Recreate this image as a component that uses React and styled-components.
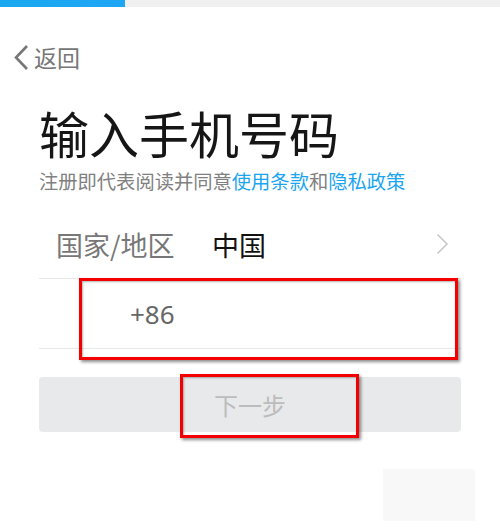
import React from 'react';
import styled, { createGlobalStyle } from 'styled-components';

const GlobalStyle = createGlobalStyle`
  html, body {
    margin: 0;
    padding: 0;
    background: #fff;
  }
  body {
    font-family: "Noto Sans CJK SC", "Noto Sans", sans-serif;
  }
`;

const Page = styled.div`
  position: relative;
  width: 500px;
  height: 531px;
  overflow: hidden;
  background: #fff;
`;

const Progress = styled.div`
  height: 7px;
  background: #f0f0f0;
`;

const ProgressFill = styled.div`
  height: 100%;
  background: linear-gradient(90deg, #19a8f0, #1ea6f5);
`;

const BackRow = styled.div`
  display: flex;
  align-items: center;
  gap: 4px;
  height: 40px;
  margin-top: 30px;
  padding-left: 12px;
  color: #767676;
  font-size: 23px;
`;

const Content = styled.div`
  padding: 0 39px;
`;

const Title = styled.h1`
  margin: 25px 0 0;
  font-size: 50px;
  font-weight: 400;
  line-height: 60px;
  color: #161616;
`;

const Subtitle = styled.p`
  margin: 5px 0 0;
  font-size: 19.3px;
  line-height: 28px;
  color: #808080;
  white-space: nowrap;
`;

const Link = styled.span`
  color: #1ca5ef;
`;

const Row = styled.div`
  display: flex;
  align-items: center;
  height: ${p => p.h}px;
  margin-top: ${p => p.mt || 0}px;
  padding-left: ${p => p.pl}px;
  padding-right: 12px;
  border-bottom: 1px solid #e8e8e8;
  font-size: 27px;
`;

const Label = styled.span`
  color: #777;
  width: 156px;
`;

const Value = styled.span`
  flex: 1;
  color: #111;
`;

const Code = styled.span`
  color: #666;
  font-size: 26px;
  font-family: "Noto Sans", sans-serif;
`;

const NextButton = styled.button`
  display: block;
  width: 100%;
  height: 55px;
  margin-top: 28px;
  border: none;
  border-radius: 4px;
  background: #e8e9eb;
  color: #bcbcbc;
  font-family: inherit;
  font-size: 24px;
`;

const Marker = styled.div`
  position: absolute;
  left: ${p => p.x}px;
  top: ${p => p.y}px;
  width: ${p => p.w}px;
  height: ${p => p.h}px;
  box-sizing: border-box;
  border: 3px solid #f50000;
  box-shadow: 2px 2px 3px rgba(0, 0, 0, 0.45), inset 1px 1px 2px rgba(0, 0, 0, 0.3);
  pointer-events: none;
`;

const Ghost = styled.div`
  position: absolute;
  left: 383px;
  top: 469px;
  width: 92px;
  height: 52px;
  background: #f8f8f8;
`;

const ChevronLeft = () => (
  <svg width="18" height="27" viewBox="0 0 18 27">
    <path d="M15 2 L4 13.5 L15 25" fill="none" stroke="#767676" strokeWidth="2.6" />
  </svg>
);

const ChevronRight = () => (
  <svg width="13" height="22" viewBox="0 0 13 22">
    <path d="M1.5 1.5 L11 11 L1.5 20.5" fill="none" stroke="#c8c8c8" strokeWidth="1.6" />
  </svg>
);

export default function App() {
  return (
    <Page>
      <GlobalStyle />
      <Progress>
        <ProgressFill style={{ width: '25%' }} />
      </Progress>
      <BackRow>
        <ChevronLeft />
        <span>返回</span>
      </BackRow>
      <Content>
        <Title>输入手机号码</Title>
        <Subtitle>
          注册即代表阅读并同意<Link>使用条款</Link>和<Link>隐私政策</Link>
        </Subtitle>
        <Row h={68} mt={15} pl={17}>
          <Label>国家/地区</Label>
          <Value>中国</Value>
          <ChevronRight />
        </Row>
        <Row h={69} pl={91}>
          <Code>+86</Code>
        </Row>
        <NextButton>下一步</NextButton>
      </Content>
      <Marker x={79} y={278} w={379} h={82} />
      <Marker x={180} y={374} w={179} h={64} />
      <Ghost />
    </Page>
  );
}
